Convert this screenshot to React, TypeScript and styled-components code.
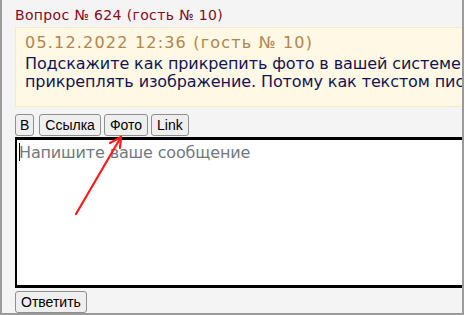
import React from "react";
import styled, { createGlobalStyle } from "styled-components";

const Global = createGlobalStyle`
  html, body { margin: 0; padding: 0; background: #ffffff; }
`;

const Frame = styled.div`
  position: relative;
  width: 464px;
  height: 315px;
  box-sizing: border-box;
  background: #f4f4f4;
  border-left: 2px solid #9a9a9a;
  border-right: 2px solid #9a9a9a;
  border-bottom: 2px solid #9a9a9a;
  overflow: hidden;
  padding: 6px 0 0 13px;
`;

const Title = styled.div`
  font-family: "DejaVu Sans", Verdana, sans-serif;
  font-size: 14px;
  line-height: 18px;
  color: #850c1c;
  letter-spacing: 0.35px;
`;

const Post = styled.div`
  margin-top: 3px;
  width: 620px;
  height: 80px;
  box-sizing: border-box;
  background: #fef8e4;
  border: 1px solid #f6e9c8;
  padding: 6px 9px;
  font-family: "DejaVu Sans", Verdana, sans-serif;
  font-size: 16px;
  line-height: 18px;
`;

const PostDate = styled.div`
  color: #b08550;
  letter-spacing: 1.2px;
  margin-bottom: 3px;
`;

const PostText = styled.div`
  color: #141452;
  white-space: nowrap;
  letter-spacing: -0.1px;
`;

const Toolbar = styled.div`
  display: flex;
  gap: 3px;
  margin-top: 7px;
`;

const Btn = styled.button<{ $narrow?: boolean }>`
  font-family: "Liberation Sans", Arial, sans-serif;
  font-size: 14px;
  color: #000;
  height: 22px;
  padding: 0 ${(p) => (p.$narrow ? 4 : 5)}px;
  background: #efefef;
  border: 1px solid #8f8f8f;
  border-radius: 3px;
  margin-right: ${(p) => (p.$narrow ? 2 : 0)}px;
`;

const Editor = styled.div`
  margin-top: 1px;
  width: 600px;
  height: 151px;
  box-sizing: border-box;
  border: 3px solid #000;
  border-left-width: 2px;
  border-right: none;
  background: #fff;
  padding: 3px 2px;
  font-family: "DejaVu Sans", Verdana, sans-serif;
  font-size: 16px;
  line-height: 20px;
  letter-spacing: -0.15px;
  color: #737880;
`;

const Caret = styled.span`
  display: inline-block;
  width: 1px;
  height: 18px;
  background: #000;
  vertical-align: -3px;
  margin-right: -1px;
`;

const Footer = styled.div`
  margin-top: 3px;
`;

const Arrow = styled.svg`
  position: absolute;
  left: 0;
  top: 0;
  pointer-events: none;
`;

export default function App() {
  return (
    <>
      <Global />
      <Frame>
        <Title>Вопрос № 624 (гость № 10)</Title>
        <Post>
          <PostDate>05.12.2022 12:36 (гость № 10)</PostDate>
          <PostText>Подскажите как прикрепить фото в вашей системе? Мне нужно</PostText>
          <PostText>прикреплять изображение. Потому как текстом писать долго</PostText>
        </Post>
        <Toolbar>
          <Btn $narrow>B</Btn>
          <Btn>Ссылка</Btn>
          <Btn>Фото</Btn>
          <Btn>Link</Btn>
        </Toolbar>
        <Editor>
          <Caret />
          Напишите ваше сообщение
        </Editor>
        <Footer>
          <Btn>Ответить</Btn>
        </Footer>
        <Arrow width="464" height="315" viewBox="0 0 464 315">
          <g stroke="#ff1a1a" strokeWidth="2.2" strokeLinecap="round" fill="none">
            <line x1="74" y1="214" x2="119" y2="137" />
            <line x1="119" y1="137" x2="108" y2="143" />
            <line x1="119" y1="137" x2="118" y2="148" />
          </g>
        </Arrow>
      </Frame>
    </>
  );
}
